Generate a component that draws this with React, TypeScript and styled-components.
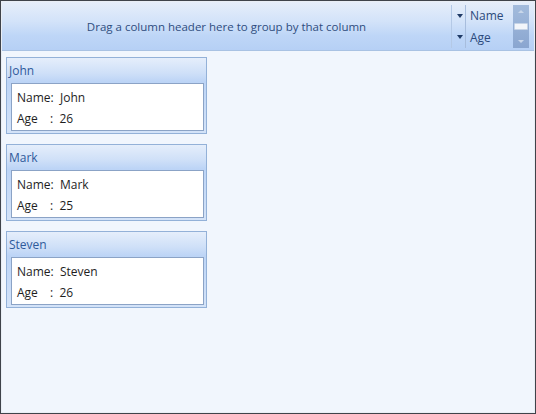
import React from 'react';
import styled, { createGlobalStyle } from 'styled-components';

const GlobalStyle = createGlobalStyle`
  html, body {
    margin: 0;
    padding: 0;
    background: #ffffff;
  }
  body {
    font-family: 'Open Sans', 'Noto Sans', sans-serif;
  }
`;

const Frame = styled.div`
  width: 536px;
  height: 414px;
  box-sizing: border-box;
  border: 1px solid #3f434a;
  box-shadow: inset 0 0 0 1px #e9eef5;
  background: #f1f6fd;
  display: flex;
  flex-direction: column;
`;

const GroupPanel = styled.div`
  height: 48px;
  margin: 1px 1px 0 1px;
  display: flex;
  align-items: stretch;
  background: linear-gradient(to bottom, #e6eefa 0%, #d3e3f9 40%, #bed6f7 70%, #b6d0f5 100%);
  border-bottom: 1px solid #a9c2e3;
`;

const DropHint = styled.div`
  flex: 1;
  display: flex;
  align-items: center;
  justify-content: center;
  font-size: 11.5px;
  color: #2f4d7e;
`;

const SortArea = styled.div`
  display: flex;
  align-items: stretch;
  padding: 3px 0 2px 0;
`;

const ArrowColumn = styled.div`
  width: 13px;
  display: flex;
  flex-direction: column;
  border-left: 1px solid #b4c9e6;
  border-right: 1px solid #a7bddd;
`;

const ArrowCell = styled.div`
  flex: 1;
  display: flex;
  align-items: center;
  justify-content: center;
  padding-left: 2px;
`;

const DownArrow = styled.span`
  width: 0;
  height: 0;
  border-left: 3px solid transparent;
  border-right: 3px solid transparent;
  border-top: 4px solid #1f3a66;
`;

const NameColumn = styled.div`
  width: 46px;
  display: flex;
  flex-direction: column;
`;

const NameCell = styled.div`
  flex: 1;
  display: flex;
  align-items: center;
  padding-left: 4px;
  font-size: 12px;
  color: #2c4a7c;
`;

const ScrollBar = styled.div`
  width: 16px;
  margin: 0 5px 0 1px;
  display: flex;
  flex-direction: column;
  align-items: center;
  justify-content: space-between;
  background: linear-gradient(to bottom, #a3bbdc, #8aa6d0);
  padding: 5px 0;
  box-sizing: border-box;
`;

const ScrollArrow = styled.span<{ up?: boolean }>`
  width: 0;
  height: 0;
  border-left: 3px solid transparent;
  border-right: 3px solid transparent;
  ${(p) => (p.up ? 'border-bottom: 3px solid #c9d7ea;' : 'border-top: 3px solid #c9d7ea;')}
`;

const Thumb = styled.span`
  width: 12px;
  height: 5px;
  background: #f2f5fa;
  border: 1px solid #c5d3e6;
  border-radius: 1px;
`;

const Content = styled.div`
  flex: 1;
  display: flex;
  flex-direction: column;
  align-items: flex-start;
  gap: 10px;
  padding: 6px 0 0 5px;
`;

const Card = styled.div`
  width: 201px;
  box-sizing: border-box;
  border: 1px solid #93b1d8;
  background: linear-gradient(to bottom, #e5eefb 0%, #cfe0f8 20%, #bcd4f6 32%, #d4e3f8 100%);
  padding: 0 2px 2px 4px;
`;

const CardTitle = styled.div`
  height: 25px;
  display: flex;
  align-items: center;
  margin-left: -2px;
  box-sizing: border-box;
  font-size: 12px;
  color: #2f5a9b;
`;

const CardBody = styled.div`
  background: #ffffff;
  border: 1px solid #8ba3c6;
  padding: 3px 0 1px 5px;
  display: flex;
  flex-direction: column;
`;

const FieldRow = styled.div`
  height: 21px;
  display: flex;
  align-items: center;
  font-size: 12px;
  color: #1e1e1e;
`;

const FieldLabel = styled.span`
  min-width: 33px;
`;

const people = [
  { name: 'John', age: 26 },
  { name: 'Mark', age: 25 },
  { name: 'Steven', age: 26 },
];

export default function App() {
  return (
    <>
      <GlobalStyle />
      <Frame>
        <GroupPanel>
          <DropHint>Drag a column header here to group by that column</DropHint>
          <SortArea>
            <ArrowColumn>
              <ArrowCell>
                <DownArrow />
              </ArrowCell>
              <ArrowCell>
                <DownArrow />
              </ArrowCell>
            </ArrowColumn>
            <NameColumn>
              <NameCell>Name</NameCell>
              <NameCell>Age</NameCell>
            </NameColumn>
            <ScrollBar>
              <ScrollArrow up />
              <Thumb />
              <ScrollArrow />
            </ScrollBar>
          </SortArea>
        </GroupPanel>
        <Content>
          {people.map((p) => (
            <Card key={p.name}>
              <CardTitle>{p.name}</CardTitle>
              <CardBody>
                <FieldRow>
                  <FieldLabel>Name</FieldLabel>:&nbsp;&nbsp;{p.name}
                </FieldRow>
                <FieldRow>
                  <FieldLabel>Age</FieldLabel>:&nbsp;&nbsp;{p.age}
                </FieldRow>
              </CardBody>
            </Card>
          ))}
        </Content>
      </Frame>
    </>
  );
}
